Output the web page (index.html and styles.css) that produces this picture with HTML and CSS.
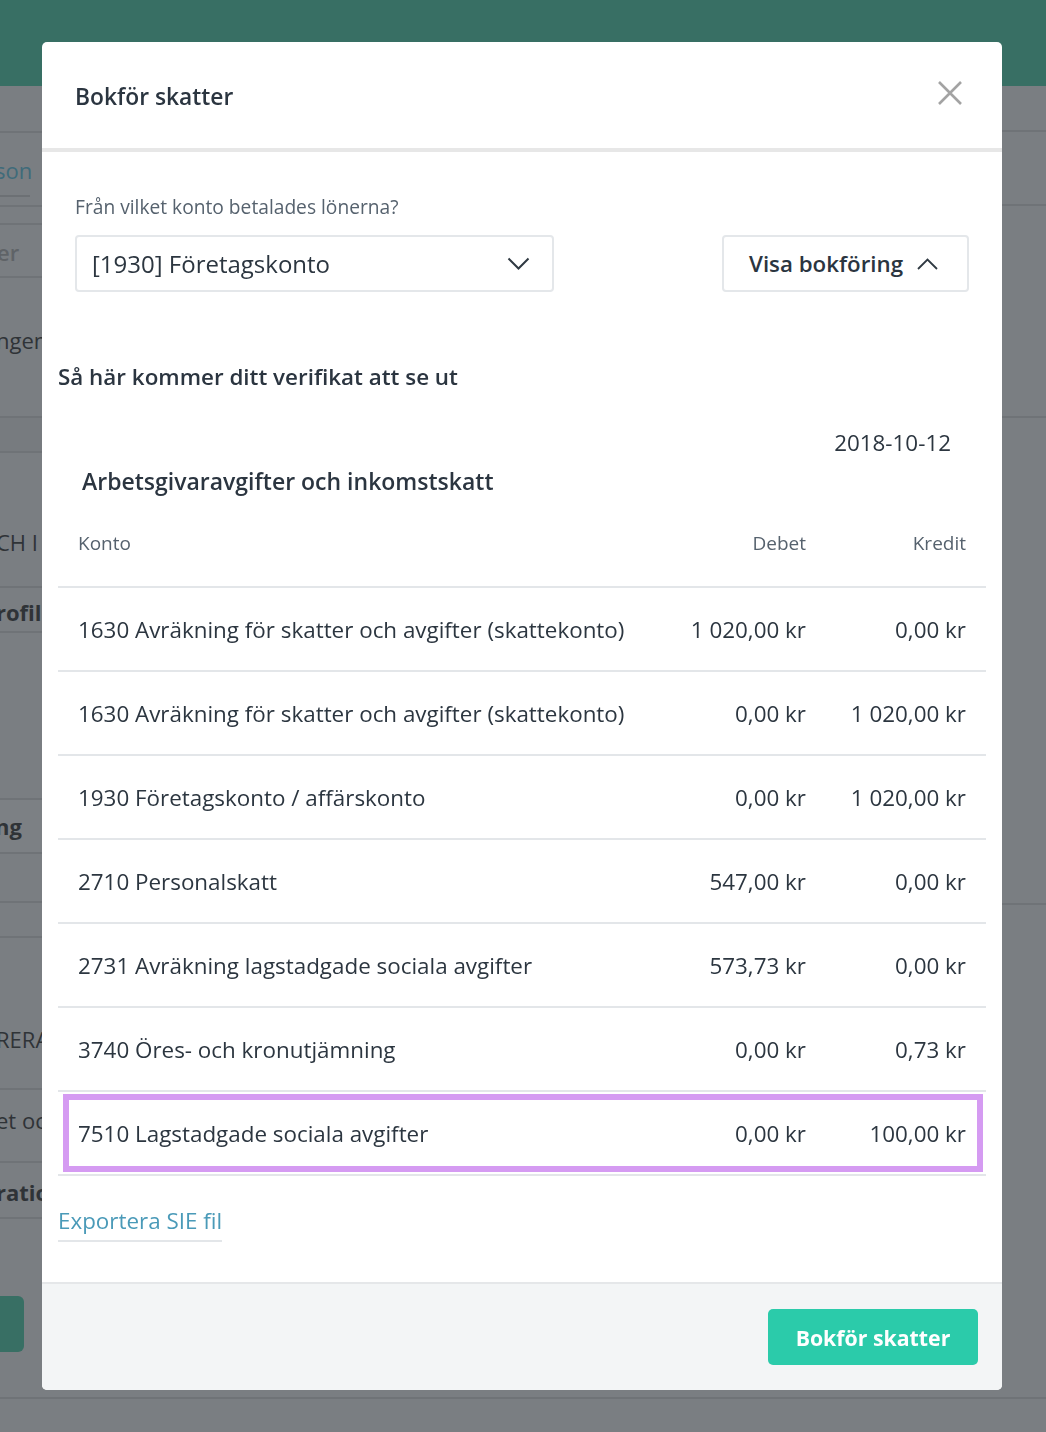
FILE: index.html
```html
<!DOCTYPE html>
<html lang="sv">
<head>
<meta charset="utf-8">
<title>Bokför skatter</title>
<link rel="stylesheet" href="styles.css">
</head>
<body>
<div class="app">
  <div class="topbar"></div>
  <div class="main">
    <div class="side-left">
      <div class="bg-row r1"></div>
      <div class="bg-row r2"><span class="bg-link">son</span></div>
      <div class="bg-row r3"></div>
      <div class="bg-row r4"><span class="bg-muted">er</span></div>
      <div class="bg-row r5"><span class="bg-text">ngen</span></div>
      <div class="bg-row r6"></div>
      <div class="bg-row r7"><span class="bg-text">CH I</span></div>
      <div class="bg-row r8"><span class="bg-text bold">rofil</span></div>
      <div class="bg-row r9"><div class="bg-box"><span class="bg-text bold">ng</span></div></div>
      <div class="bg-row r10"></div>
      <div class="bg-row r11"><span class="bg-text">RERA</span></div>
      <div class="bg-row r12"><span class="bg-text">et oc</span></div>
      <div class="bg-row r13"><span class="bg-text bold">ratio</span></div>
      <div class="bg-row r14"><div class="bg-button"></div></div>
    </div>
    <div class="side-right">
      <div class="bg-row s1"></div>
      <div class="bg-row s2"></div>
      <div class="bg-row s3"></div>
      <div class="bg-row s4"></div>
      <div class="bg-row s5"><span class="bg-text">0,00</span></div>
    </div>
  </div>
</div>

<div class="modal">
  <div class="modal-header">
    <h2 class="modal-title">Bokför skatter</h2>
    <button class="close" aria-label="Stäng">
      <svg width="26" height="26" viewBox="0 0 26 26"><path d="M2 2 L24 24 M24 2 L2 24" stroke="#a3a3a3" stroke-width="2.6" fill="none"/></svg>
    </button>
  </div>
  <div class="modal-body">
    <div class="form-row">
      <div class="field">
        <label class="field-label">Från vilket konto betalades lönerna?</label>
        <div class="select">
          <span>[1930] Företagskonto</span>
          <svg width="23" height="14" viewBox="0 0 23 14"><path d="M1.5 1.5 L11.5 11.5 L21.5 1.5" stroke="#2f3942" stroke-width="2" fill="none"/></svg>
        </div>
      </div>
      <button class="toggle">
        <span>Visa bokföring</span>
        <svg width="21" height="12" viewBox="0 0 21 12"><path d="M1 11 L10.5 1.5 L20 11" stroke="#2f3942" stroke-width="1.8" fill="none"/></svg>
      </button>
    </div>

    <h3 class="preview-title">Så här kommer ditt verifikat att se ut</h3>

    <div class="voucher">
      <div class="voucher-date">2018-10-12</div>
      <div class="voucher-title">Arbetsgivaravgifter och inkomstskatt</div>
      <div class="vt">
        <div class="vt-row vt-head"><span>Konto</span><span class="num">Debet</span><span class="num">Kredit</span></div>
        <div class="vt-row"><span>1630 Avräkning för skatter och avgifter (skattekonto)</span><span class="num">1 020,00 kr</span><span class="num">0,00 kr</span></div>
        <div class="vt-row"><span>1630 Avräkning för skatter och avgifter (skattekonto)</span><span class="num">0,00 kr</span><span class="num">1 020,00 kr</span></div>
        <div class="vt-row"><span>1930 Företagskonto / affärskonto</span><span class="num">0,00 kr</span><span class="num">1 020,00 kr</span></div>
        <div class="vt-row"><span>2710 Personalskatt</span><span class="num">547,00 kr</span><span class="num">0,00 kr</span></div>
        <div class="vt-row"><span>2731 Avräkning lagstadgade sociala avgifter</span><span class="num">573,73 kr</span><span class="num">0,00 kr</span></div>
        <div class="vt-row"><span>3740 Öres- och kronutjämning</span><span class="num">0,00 kr</span><span class="num">0,73 kr</span></div>
        <div class="vt-row highlight"><span>7510 Lagstadgade sociala avgifter</span><span class="num">0,00 kr</span><span class="num">100,00 kr</span></div>
      </div>
    </div>

    <a class="export" href="#">Exportera SIE fil</a>
  </div>
  <div class="modal-footer">
    <button class="primary">Bokför skatter</button>
  </div>
</div>
</body>
</html>
```

FILE: styles.css
```css
* { box-sizing: border-box; }
html, body { margin: 0; padding: 0; }
body {
  width: 1046px;
  height: 1432px;
  overflow: hidden;
  background: #7a7e82;
  font-family: "Open Sans", "Noto Sans", sans-serif;
  color: #2c3640;
}

/* ---------- dimmed background page ---------- */
.app { width: 1046px; height: 1432px; }
.topbar { height: 86px; background: #386f64; }
.main { display: flex; }
.side-left { width: 300px; }
.side-right { flex: 1; display: flex; flex-direction: column; align-items: stretch; }
.bg-row {
  border-bottom: 2px solid #6f7377;
  font-size: 22px;
  line-height: 30px;
  white-space: nowrap;
  overflow: hidden;
}
.bg-text { color: #2f3337; margin-left: -4px; }
.bg-text.bold { font-weight: 700; }
.bg-link { color: #3f6b7a; margin-left: -5px; display: inline-block; border-bottom: 2px solid #6c7074; padding-bottom: 10px; width: 35px; }
.bg-muted { color: #5f6367; margin-left: -3px; font-weight: 600; }
.r1 { height: 47px; }
.r2 { height: 74px; padding-top: 22px; }
.r3 { height: 18px; }
.r4 { height: 53px; padding-top: 12px; }
.r5 { height: 140px; padding-top: 47px; }
.r6 { height: 35px; background: #777b7f; }
.r7 { height: 135px; padding-top: 74px; }
.r8 { height: 45px; padding-top: 9px; }
.r9 { height: 270px; padding-top: 165px; }
.bg-box {
  width: 160px;
  height: 56px;
  margin-left: -100px;
  border: 2px solid #6f7377;
  border-radius: 5px;
  background: #7c8084;
  padding: 11px 0 0 97px;
}
.r10 { height: 35px; }
.r11 { height: 152px; padding-top: 86px; }
.r12 { height: 73px; padding-top: 15px; }
.r13 { height: 56px; padding-top: 14px; }
.r14 { height: 180px; padding-top: 77px; }
.bg-button { width: 124px; height: 56px; margin-left: -100px; border-radius: 6px; background: #386f64; }
.s1 { height: 46px; }
.s2 { height: 74px; }
.s3 { height: 212px; }
.s4 { height: 487px; }
.s5 { height: 494px; padding-top: 345px; padding-left: 1px; }
.s5 .bg-text { margin-left: 0; color: #303438; }

/* ---------- modal ---------- */
.modal {
  position: fixed;
  left: 42px;
  top: 42px;
  width: 960px;
  height: 1348px;
  background: #fff;
  border-radius: 5px;
  display: flex;
  flex-direction: column;
  overflow: hidden;
}
.modal-header {
  height: 110px;
  border-bottom: 4px solid #e7e7e7;
  display: flex;
  align-items: center;
  justify-content: space-between;
  padding: 0 32px 6px 33px;
}
.modal-title {
  margin: 0;
  font-size: 22.8px;
  font-weight: 600;
  color: #2b3540;
  line-height: 30px;
  padding-top: 10px;
}
.close {
  border: 0;
  background: none;
  padding: 0;
  width: 40px;
  height: 40px;
  display: flex;
  align-items: center;
  justify-content: center;
  margin-top: 2px;
}

.modal-body {
  flex: 1;
  padding: 42px 16px 0 16px;
}
.form-row {
  display: flex;
  justify-content: space-between;
  align-items: flex-end;
  padding: 0 17px;
}
.field { display: flex; flex-direction: column; gap: 15px; }
.field-label {
  font-size: 19.2px;
  line-height: 26px;
  color: #56626e;
}
.select {
  width: 479px;
  height: 57px;
  border: 2px solid #e4e7ea;
  border-radius: 4px;
  display: flex;
  align-items: center;
  justify-content: space-between;
  padding: 0 22px 0 15px;
  font-size: 24px;
  color: #2c3640;
}
.toggle {
  width: 247px;
  height: 57px;
  border: 2px solid #e4e7ea;
  border-radius: 4px;
  background: #fff;
  display: flex;
  align-items: center;
  gap: 14px;
  padding: 0 0 0 25px;
  font-family: inherit;
  font-size: 22.3px;
  font-weight: 600;
  color: #2b3540;
}

.preview-title {
  margin: 70px 0 0 0;
  font-size: 22.4px;
  font-weight: 600;
  line-height: 30px;
  color: #2b3540;
}

.voucher { margin-top: 36px; }
.voucher-date {
  text-align: right;
  padding-right: 35px;
  font-size: 22.4px;
  line-height: 30px;
  color: #2c3640;
}
.voucher-title {
  margin-top: 8px;
  padding-left: 24px;
  font-size: 23px;
  font-weight: 600;
  line-height: 30px;
  color: #2b3540;
}
.vt { margin-top: 23px; }
.vt-row {
  display: grid;
  grid-template-columns: 1fr 160px 160px;
  align-items: center;
  height: 84px;
  padding: 0 20px;
  border-bottom: 2px solid #e3e6e9;
  font-size: 22.4px;
  color: #2c3640;
  white-space: nowrap;
}
.vt-row .num { text-align: right; }
.vt-head {
  height: 69px;
  align-items: start;
  padding-top: 11px;
  font-size: 19px;
  color: #56626e;
}
.highlight { position: relative; }
.highlight::after {
  content: "";
  position: absolute;
  left: 5px;
  right: 3px;
  top: 2px;
  bottom: 2px;
  border: 6px solid #d59bf2;
}

.export {
  display: inline-block;
  margin-top: 30px;
  font-size: 22.4px;
  line-height: 30px;
  color: #4a9ab8;
  text-decoration: none;
  border-bottom: 2px solid #e3e6e9;
  padding-bottom: 4px;
}

.modal-footer {
  height: 108px;
  border-top: 2px solid #e5e7e9;
  background: #f3f5f6;
  display: flex;
  align-items: center;
  justify-content: flex-end;
  padding: 0 24px 0 0;
}
.primary {
  width: 210px;
  height: 56px;
  border: 0;
  border-radius: 5px;
  background: #2bcbaa;
  color: #fff;
  font-family: inherit;
  font-size: 21.3px;
  font-weight: 700;
}
```
